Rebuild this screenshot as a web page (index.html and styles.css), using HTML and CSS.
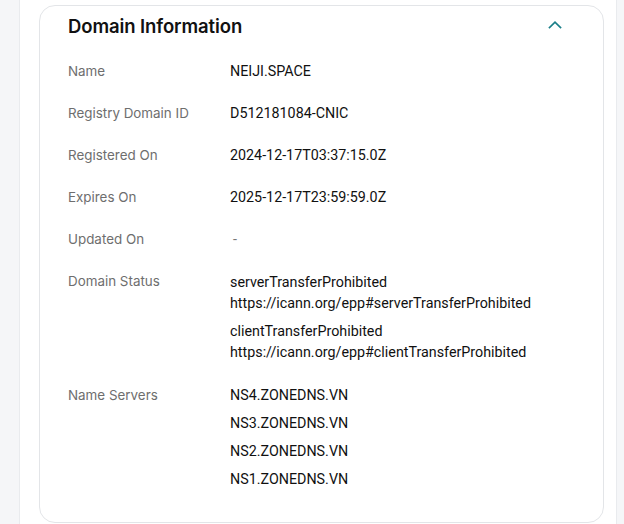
FILE: index.html
```html
<!DOCTYPE html>
<html lang="en">
<head>
<meta charset="utf-8">
<title>Domain Information</title>
<link rel="stylesheet" href="styles.css">
</head>
<body>
<div class="page">
  <div class="rail rail-left"></div>
  <main class="main">
    <section class="card">
      <header class="card-head">
        <h2 class="title">Domain Information</h2>
        <button class="toggle" aria-label="Collapse">
          <svg width="24" height="24" viewBox="0 0 24 24" fill="none"><path d="M6.5 14.5L12 9.2L17.5 14.5" stroke="#1b7f89" stroke-width="1.7" stroke-linecap="square"/></svg>
        </button>
      </header>
      <dl class="info">
        <div class="row"><dt>Name</dt><dd><span class="line">NEIJI.SPACE</span></dd></div>
        <div class="row"><dt>Registry Domain ID</dt><dd><span class="line">D512181084-CNIC</span></dd></div>
        <div class="row"><dt>Registered On</dt><dd><span class="line">2024-12-17T03:37:15.0Z</span></dd></div>
        <div class="row"><dt>Expires On</dt><dd><span class="line">2025-12-17T23:59:59.0Z</span></dd></div>
        <div class="row"><dt>Updated On</dt><dd><span class="line dash">-</span></dd></div>
        <div class="row row-status"><dt>Domain Status</dt>
          <dd class="status">
            <div class="status-item"><span class="sline">serverTransferProhibited</span><span class="sline">https://icann.org/epp#serverTransferProhibited</span></div>
            <div class="status-item"><span class="sline">clientTransferProhibited</span><span class="sline">https://icann.org/epp#clientTransferProhibited</span></div>
          </dd>
        </div>
        <div class="row"><dt>Name Servers</dt>
          <dd class="ns">
            <span class="line">NS4.ZONEDNS.VN</span>
            <span class="line">NS3.ZONEDNS.VN</span>
            <span class="line">NS2.ZONEDNS.VN</span>
            <span class="line">NS1.ZONEDNS.VN</span>
          </dd>
        </div>
      </dl>
    </section>
  </main>
  <div class="rail rail-right"></div>
</div>
</body>
</html>
```
FILE: styles.css
```css
html, body {
  margin: 0;
  padding: 0;
  background: #ffffff;
}
body {
  font-family: Roboto, "Liberation Sans", Arial, sans-serif;
  color: #111111;
}
.page {
  display: flex;
  height: 524px;
  overflow: hidden;
}
.rail {
  background: #f5f6f8;
  flex: none;
}
.rail-left {
  width: 19px;
  border-right: 1px solid #e9ebee;
}
.rail-right {
  width: 7px;
  border-left: 1px solid #e9ebee;
}
.main {
  flex: 1;
  padding: 5px 12px 0 19px;
  min-width: 0;
}
.card {
  border: 1px solid #e3e5e8;
  border-radius: 16px;
  padding: 6px 36px 20px 28px;
  height: 518px;
  box-sizing: border-box;
}
.card-head {
  display: flex;
  align-items: center;
  justify-content: space-between;
  height: 28px;
  margin-bottom: 10px;
}
.title {
  margin: 0;
  font-family: Inter, "Noto Sans", sans-serif;
  font-size: 18.5px;
  font-weight: 600;
  line-height: 28px;
  color: #111111;
  letter-spacing: -0.1px;
}
.toggle {
  border: 0;
  background: transparent;
  padding: 0;
  width: 24px;
  height: 24px;
  display: flex;
  align-items: center;
  justify-content: center;
  margin-top: -2px;
}
.info {
  margin: 0;
}
.row {
  display: flex;
  padding: 11px 0;
}
.row-status {
  padding-top: 12px;
}
.row dt {
  width: 162px;
  flex: none;
  font-family: Inter, "Noto Sans", sans-serif;
  font-size: 13.4px;
  line-height: 20px;
  color: #6e6e6e;
}
.row-status dt {
  line-height: 18px;
}
.row dd {
  margin: 0;
  font-size: 14.3px;
  line-height: 20px;
  color: #111111;
  display: flex;
  flex-direction: column;
}
.dash {
  color: #777777;
  padding-left: 3px;
}
.status {
  gap: 7px;
}
.status-item {
  display: flex;
  flex-direction: column;
}
.sline {
  line-height: 21px;
}
.ns {
  gap: 8px;
}
```
